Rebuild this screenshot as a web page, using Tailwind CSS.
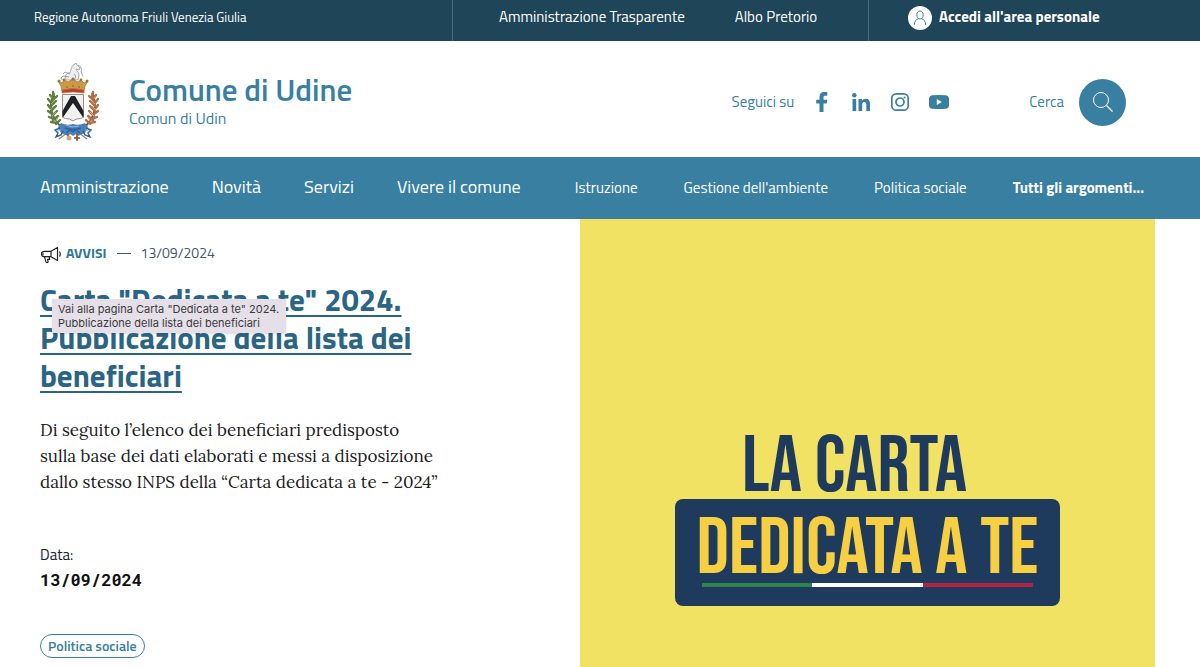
<!DOCTYPE html>
<html lang="it">
<head>
    <meta charset="UTF-8">
    <meta name="viewport" content="width=device-width, initial-scale=1.0">
    <title>Comune di Udine</title>
    <script src="https://cdn.jsdelivr.net/npm/@tailwindcss/browser@4"></script>
</head>
<body class="min-h-screen overflow-hidden bg-white font-['Titillium_Web',Roboto,sans-serif] text-[#17242d]">

    <!-- top bar -->
    <div class="flex h-[41px] items-stretch bg-[#1f4558] text-white">
        <div class="flex w-[453px] shrink-0 items-center border-r border-[#4b6c7c] pb-[6px] pl-[34px] text-[13px]">
            <a href="#">Regione Autonoma Friuli Venezia Giulia</a>
        </div>
        <nav class="flex w-[416px] shrink-0 items-center gap-[50px] border-r border-[#4b6c7c] pb-[7px] pl-[46px] text-[15px]">
            <a href="#">Amministrazione Trasparente</a>
            <a href="#">Albo Pretorio</a>
        </nav>
        <a href="#" class="flex items-center gap-[7px] pb-[6px] pl-[39px] text-[15px] font-bold">
            <svg class="size-6" viewBox="0 0 24 24" fill="none" stroke="#3a7fa3">
                <circle cx="12" cy="12" r="12" fill="#fff" stroke="none"/>
                <path d="M12 5c2 0 3.200 1.500 3.200 3.700S13.800 13 12 13s-3.200-2.100-3.200-4.300S10 5 12 5zM6.200 19c.3-3.500 2-5.800 4.300-6.300M17.800 19c-.3-3.500-2-5.800-4.300-6.300"/>
            </svg>
            Accedi all'area personale
        </a>
    </div>

    <!-- header -->
    <header class="flex h-[116px] items-center pr-[74px] pl-[46px] text-[#387fa2]">
        <a href="#" class="flex items-center gap-[29px] pt-[6px]">
            <svg class="h-[80px] w-[54px]" viewBox="0 0 54 80" fill="none">
                <!-- horse -->
                <path d="M20 18c-2-4 0-7 4-7 1-4 2-8 5-9l1-1 1 2 3 3-1 2-3-1c1 3 3 3 3 6 0 2-1 3-1 5z" fill="#eceef0" stroke="#868b90" stroke-width=".7"/>
                <path d="M24 12l-5-2-2 2M23 15l-6-1-2 2 1 2M32 3c3 1 4 4 3 7l2 4M28 12c2 1 2 4 0 6" stroke="#868b90" stroke-width=".8"/>
                <!-- crown -->
                <path d="M16 26h22l-2 4H18z" fill="#c43832"/>
                <path d="M12 19l4 2 2-3 4 2 5-3 4 3 4-2 3 3 4-2-3 5-1 5H16l-1-5z" fill="#c99b45" stroke="#8c642d" stroke-width=".6"/>
                <path d="M16 28q11-3 22 0v3q-11-2-22 0z" fill="#c43832" stroke="#a8803c" stroke-width=".8"/>
                <g fill="#b06a32"><circle cx="13" cy="19" r="1.500"/><circle cx="18" cy="18" r="1.400"/><circle cx="27" cy="17" r="1.600"/><circle cx="35" cy="18" r="1.400"/><circle cx="41" cy="19" r="1.500"/><circle cx="21" cy="25" r="1"/><circle cx="27" cy="24" r="1"/><circle cx="33" cy="25" r="1"/></g>
                <!-- laurel and oak -->
                <path d="M8 31C3 42 4 54 15 65" stroke="#5f7442" stroke-width="2"/>
                <path d="M7 30l1 5M4 33l3 4M11 34l-5 5M2 37l4 5M10 39l-5 5M2 43l3 4M10 44l-5 5M2 49l4 3M11 49l-5 5M3 55l5 2M12 54l-5 4M5 60l6 1M14 58l-4 4" stroke="#657c40" stroke-width="2.400" stroke-linecap="round"/>
                <path d="M6 36l-2-1M5 42l3-3M4 48l4-4M6 54l4-4M9 60l3-4" stroke="#a0ae72" stroke-width="1"/>
                <path d="M46 31C51 42 50 54 39 65" stroke="#81502d" stroke-width="2"/>
                <path d="M47 30l-1 5M50 33l-3 4M43 34l5 5M52 37l-4 5M44 39l5 5M52 43l-3 4M44 44l5 5M52 49l-4 3M43 49l5 5M51 55l-5 2M42 54l5 4M49 60l-6 1M40 58l4 4" stroke="#ad7048" stroke-width="2.400" stroke-linecap="round"/>
                <path d="M48 36l2-1M49 42l-3-3M50 48l-4-4M48 54l-4-4M45 60l-3-4" stroke="#dba77d" stroke-width="1"/>
                <!-- shield -->
                <path d="M16.500 32.500h21V54q0 2-3 2.500-5 0-7.500 2.500-2.500-2.500-7.500-2.500-3-.5-3-2.500z" fill="#f1f1f2" stroke="#a58a82"/>
                <path d="M25 34h4l8.500 15v7L27 41 16.500 56v-7z" fill="#202126"/>
                <!-- ribbon -->
                <path d="M13 77l12-9M41 77l-12-9" stroke="#9b8a60" stroke-width="1.300"/>
                <path d="M15 61q6 3 12 1 6 2 12-1l3 4-3 6-7 3-2-2-3 2-3-2-2 2-7-3-3-6z" fill="#4b80bb"/>
                <path d="M14 66l-5 2 3 3-2 4 5-2 2-4M40 66l5 2-3 3 2 4-5-2-2-4M19 66q8 3 16 0M20 71l4-3 3 2 3-2 4 3" stroke="#2f609d" stroke-width="1.400"/>
                <path d="M20 63l6 2 7-1M11 69l4-1M39 68l4 1" stroke="#92b8de"/>
                <path d="M22 72v4M31 71v8M28 76h6" stroke="#8b5a34" stroke-width="1.500"/>
                <circle cx="23" cy="76" r="2.500" fill="#cfad75"/><circle cx="31" cy="76" r="1.700" fill="#8b5a34"/>
            </svg>
            <div class="pb-[2px]">
                <div class="text-[31px] leading-[34px] font-semibold">Comune di Udine</div>
                <div class="text-[16px] leading-[22px]">Comun di Udin</div>
            </div>
        </a>
        <div class="ml-auto flex items-center pt-[6px]">
            <span class="mr-[18px] text-[15px]">Seguici su</span>
            <div class="flex gap-[19px]">
                <a href="#" aria-label="Facebook"><svg class="size-5" viewBox="0 0 20 20" fill="currentColor"><path d="M7.500 20v-8.500H4.200V7.700h3.300V4.800C7.500 1.700 9.200 0 12 0h3.300v3.800H13c-1 0-1.500.5-1.500 1.500v2.400h3.700l-.5 3.800h-3.200V20z"/></svg></a>
                <a href="#" aria-label="LinkedIn"><svg class="size-5" viewBox="0 0 20 20" fill="currentColor"><circle cx="3.300" cy="3.300" r="2.200"/><path d="M1.500 7h3.700v12H1.500zM7.500 7H11v1.700c.8-1.300 2-2 3.700-2 3 0 4.300 1.900 4.300 5.100V19h-3.700v-6.500c0-1.700-.6-2.600-2-2.600-1.400 0-2.100.9-2.100 2.600V19H7.500z"/></svg></a>
                <a href="#" aria-label="Instagram"><svg class="size-5" viewBox="0 0 20 20" fill="none" stroke="currentColor" stroke-width="1.700"><rect x="1.800" y="1.800" width="16.400" height="16.400" rx="4.500"/><circle cx="10" cy="10" r="4"/><circle cx="14.500" cy="5.500" r="1" fill="currentColor" stroke="none"/></svg></a>
                <a href="#" aria-label="YouTube"><svg class="size-5" viewBox="0 0 20 20" fill="currentColor"><path fill-rule="evenodd" d="M3 3.300q7-.7 14 0 2.700.3 3 3 .4 3.700 0 7.400-.3 2.700-3 3-7 .7-14 0-2.700-.3-3-3-.4-3.700 0-7.400.3-2.700 3-3zM7.800 7v6l5-3z"/></svg></a>
            </div>
            <span class="mr-[15px] ml-20 text-[15px]">Cerca</span>
            <button aria-label="Cerca" class="flex size-[47px] items-center justify-center rounded-full bg-[#387fa2] text-white">
                <svg class="size-6" viewBox="0 0 24 24" fill="none" stroke="currentColor"><circle cx="10" cy="10" r="7.500"/><path d="M15.500 15.500l6 6" stroke-width="1.300"/></svg>
            </button>
        </div>
    </header>

    <!-- main menu -->
    <nav class="flex h-[62px] items-center bg-[#387fa2] pr-14 pl-10 text-white">
        <div class="flex gap-[43px] pb-[3px] text-[18px]">
            <a href="#">Amministrazione</a>
            <a href="#">Novità</a>
            <a href="#">Servizi</a>
            <a href="#">Vivere il comune</a>
        </div>
        <div class="ml-auto flex gap-[46px] text-[15px]">
            <a href="#">Istruzione</a>
            <a href="#">Gestione dell'ambiente</a>
            <a href="#">Politica sociale</a>
            <a href="#" class="font-bold">Tutti gli argomenti...</a>
        </div>
    </nav>

    <main class="grid grid-cols-[540fr_575fr] pr-[45px] pl-10">
        <article class="pt-[23px]">
            <div class="flex items-center text-[14px] leading-[20px] text-[#455a68]">
                <svg class="mt-1 mr-1 h-[18px] w-[22px]" viewBox="0 0 22 18" fill="none" stroke="#222" stroke-width="1.200" stroke-linejoin="round">
                    <path d="M17.500 1.500v13L11 10.700H4.500C2.500 10.700 1.500 9.600 1.500 8s1-2.700 3-2.700H11zM11 5.300v5.400M19.500 5.500q1.500 2.500 0 5M4.500 10.700l1.300 5q.3 1 1.400.9 1-.2.800-1.200l-.4-2h2l-.5-2.700M1.700 8H4"/>
                </svg>
                <a href="#" class="font-bold text-[#2f7797]">AVVISI</a>
                <span class="mx-[10px] h-px w-[14px] bg-[#455a68]"></span>
                <time>13/09/2024</time>
            </div>
            <div class="relative mt-[17px]">
                <h1 class="max-w-[400px] text-[31px] leading-[38px] font-bold text-[#2b6585]">
                    <a href="#" class="underline decoration-2 underline-offset-4">Carta "Dedicata a te" 2024. Pubblicazione della lista dei beneficiari</a>
                </h1>
                <div role="tooltip" class="absolute top-[18px] left-3 w-[234px] bg-[#e5e0e8] px-[6px] py-[3px] font-[Inter,sans-serif] text-[11px] leading-[14px] text-[#3c393e] shadow-sm">Vai alla pagina Carta "Dedicata a te" 2024. Pubblicazione della lista dei beneficiari</div>
            </div>
            <p class="mt-[22px] font-[Lora,'Liberation_Serif',serif] text-[17px] leading-[26px] text-[#1c1c1c]">
                Di seguito l’elenco dei beneficiari predisposto<br>
                sulla base dei dati elaborati e messi a disposizione<br>
                dallo stesso INPS della “Carta dedicata a te - 2024”
            </p>
            <div class="mt-12 text-[15px] leading-6">Data:</div>
            <div class="font-['Roboto_Mono','DejaVu_Sans_Mono',monospace] text-[17px] leading-[26px] font-bold text-[#111]">13/09/2024</div>
            <a href="#" class="mt-[41px] inline-block rounded-full border border-[#387fa2] px-[7px] text-[14px] leading-[22px] font-semibold text-[#387fa2]">Politica sociale</a>
        </article>

        <figure class="flex min-h-[448px] flex-col items-center bg-[#f1e263] pt-[216px] font-['Bebas_Neue','Liberation_Sans_Narrow',sans-serif] text-[80px] whitespace-nowrap">
            <div class="mr-[26px] leading-[64px] text-[#1e3a5c]">LA CARTA</div>
            <div class="flex h-[107px] w-[385px] flex-col items-center rounded-lg bg-[#1e3a5c] pt-[18px] text-[#f6cf42]">
                <div class="leading-[64px]">DEDICATA A TE</div>
                <div class="mt-[2px] flex h-1 w-[331px]">
                    <span class="flex-1 bg-[#2f8548]"></span>
                    <span class="flex-1 bg-white"></span>
                    <span class="flex-1 bg-[#b32442]"></span>
                </div>
            </div>
        </figure>
    </main>
</body>
</html>
